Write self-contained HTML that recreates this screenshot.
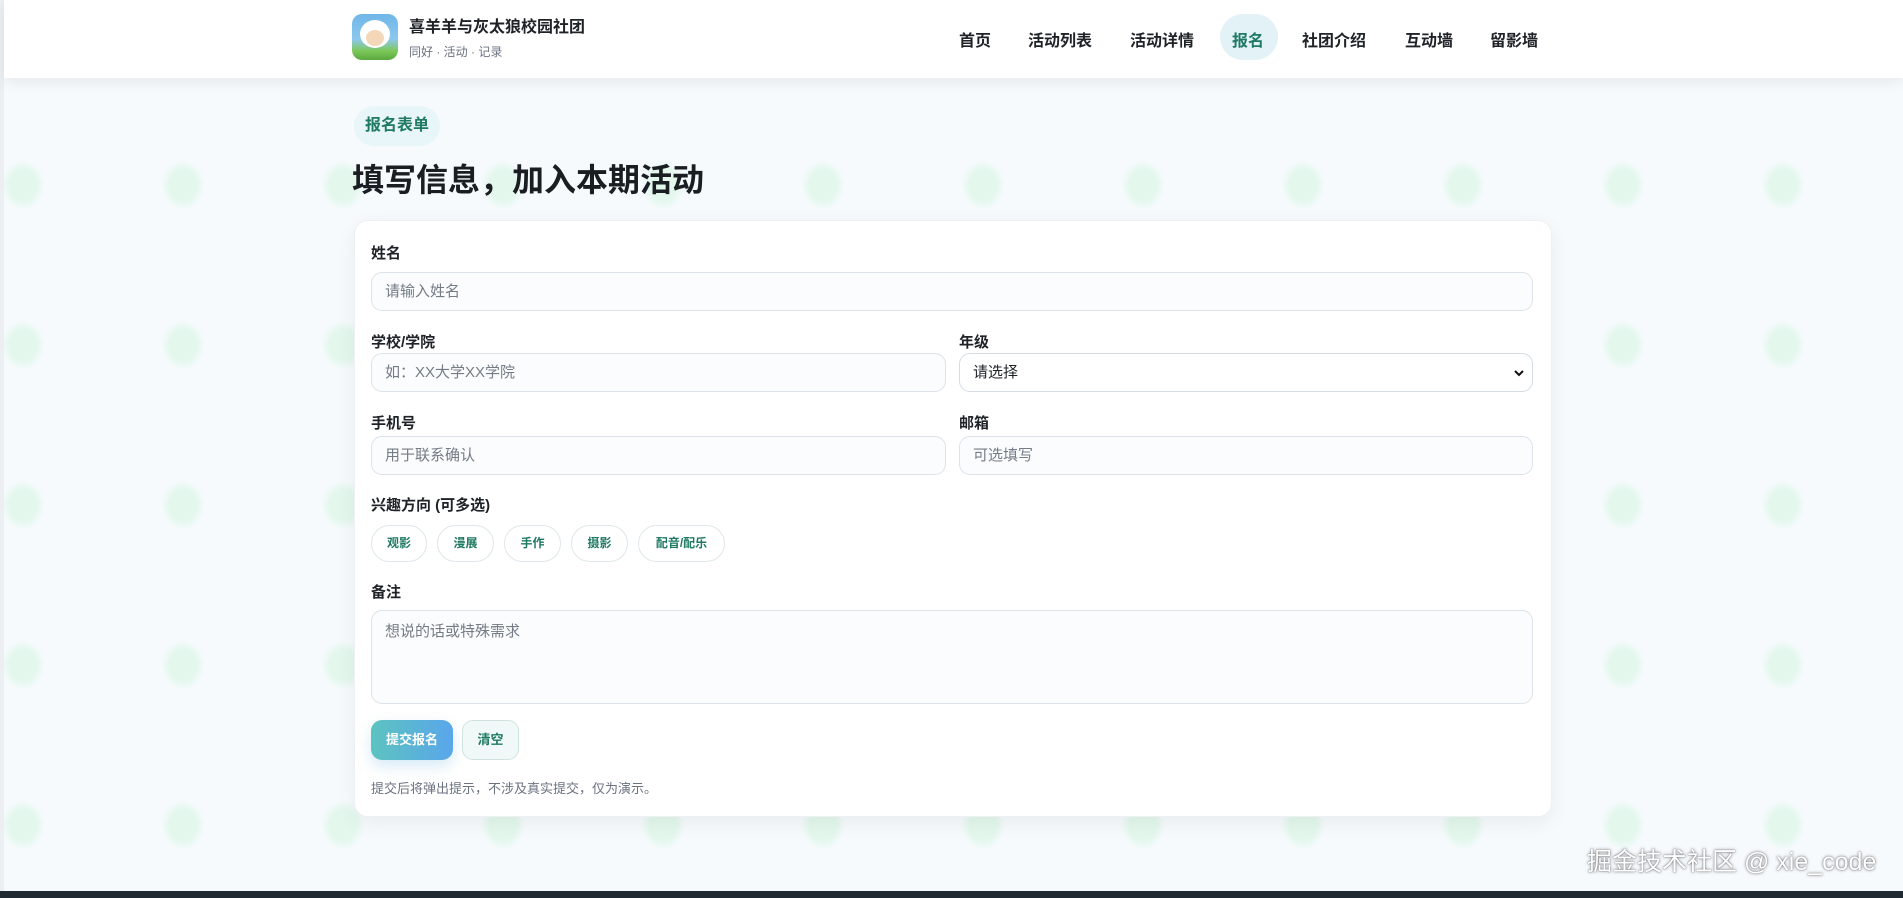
<!DOCTYPE html>
<html><head><meta charset="utf-8"><style>
*{box-sizing:border-box;margin:0;padding:0}
html,body{width:1903px;height:898px;overflow:hidden}
body{font-family:"Liberation Sans","Noto Sans CJK SC",sans-serif;background-color:#f6fafd;
background-image:radial-gradient(ellipse 22px 25px at 23px 25px,#e3f7ec 60%,rgba(227,247,236,0) 100%);
background-size:160px 160px;background-position:0 160px;position:relative;color:#1f2328}
.left{position:absolute;left:0;top:0;width:4px;height:898px;background:#eceff2}
header{position:absolute;left:4px;top:0;width:1899px;height:78px;background:#fff;box-shadow:0 4px 14px rgba(0,0,0,.07)}
.logo{position:absolute;left:352px;top:14px;width:46px;height:46px;border-radius:10px;background:linear-gradient(#6fb6e8 0,#8cc7ee 55%,#7cc85a 80%,#5aa83e 100%);overflow:hidden}
.logo::before{content:"";position:absolute;left:8px;top:6px;width:30px;height:28px;border-radius:50%;background:#fff}
.logo::after{content:"";position:absolute;left:14px;top:16px;width:18px;height:16px;border-radius:50%;background:#f4d6b8}
.t1{position:absolute;left:409px;top:13px;font-size:16px;font-weight:bold;color:#1f2328}
.t2{position:absolute;left:409px;top:43px;font-size:12px;color:#6b7280}
nav a{position:absolute;top:27px;font-size:16px;font-weight:bold;color:#1f2328}
.act{position:absolute;left:1220px;top:14px;width:58px;height:46px;border-radius:23px;background:#e3f2f6}
.badge{position:absolute;left:354px;top:106px;width:86px;height:40px;border-radius:20px;background:#e8f5f9;color:#1f7a63;font-size:16px;font-weight:bold;text-align:center;line-height:40px}
h1{position:absolute;left:352px;top:155px;font-size:32px;font-weight:bold;color:#1a1d21}
.card{position:absolute;left:354px;top:220px;width:1198px;height:597px;background:#fff;border-radius:14px;box-shadow:0 6px 20px rgba(0,0,0,.06);border:1px solid #eef1f4}
.lb{position:absolute;font-size:15px;font-weight:bold;color:#1f2328}
.in{position:absolute;height:39px;border:1px solid #dde3ea;border-radius:11px;background:#fafcfe;font-size:15px;color:#757c85;padding-left:13px;line-height:37px}
.chip{position:absolute;top:525px;height:37px;border:1px solid #dfe7ea;border-radius:19px;background:#fff;font-size:12px;font-weight:bold;color:#1f7a63;text-align:center;line-height:35px}
.btn{position:absolute;top:720px;height:40px;border-radius:11px;font-size:13px;font-weight:bold;text-align:center;line-height:40px}
.wm{position:absolute;left:1587px;top:842px;font-size:25px;color:#fff;text-shadow:0 0 3px rgba(0,0,0,.5),0 0 1px rgba(0,0,0,.6)}
.foot{position:absolute;left:0;top:891px;width:1903px;height:7px;background:#1f2a33}
</style></head><body>
<div class="left"></div>
<header></header>
<div class="logo"></div>
<div class="t1">喜羊羊与灰太狼校园社团</div>
<div class="t2">同好 · 活动 · 记录</div>
<div class="act"></div>
<nav>
<a style="left:959px">首页</a>
<a style="left:1028px">活动列表</a>
<a style="left:1130px">活动详情</a>
<a style="left:1232px;color:#1f7a63">报名</a>
<a style="left:1302px">社团介绍</a>
<a style="left:1405px">互动墙</a>
<a style="left:1490px">留影墙</a>
</nav>
<div class="badge">报名表单</div>
<h1>填写信息，加入本期活动</h1>
<div class="card"></div>
<div class="lb" style="left:371px;top:242px">姓名</div>
<div class="in" style="left:371px;top:272px;width:1162px">请输入姓名</div>
<div class="lb" style="left:371px;top:331px">学校/学院</div>
<div class="lb" style="left:959px;top:331px">年级</div>
<div class="in" style="left:371px;top:353px;width:575px">如：XX大学XX学院</div>
<div class="in" style="left:959px;top:353px;width:574px;background:#fff;color:#1f2328;border-color:#d5dce3">请选择<svg style="position:absolute;right:8px;top:15px" width="10" height="8" viewBox="0 0 10 8"><path d="M1 2l4 4 4-4" stroke="#111" stroke-width="2" fill="none"/></svg></div>
<div class="lb" style="left:371px;top:412px">手机号</div>
<div class="lb" style="left:959px;top:412px">邮箱</div>
<div class="in" style="left:371px;top:436px;width:575px">用于联系确认</div>
<div class="in" style="left:959px;top:436px;width:574px">可选填写</div>
<div class="lb" style="left:371px;top:494px">兴趣方向 (可多选)</div>
<div class="chip" style="left:371px;width:56px">观影</div>
<div class="chip" style="left:437px;width:57px">漫展</div>
<div class="chip" style="left:504px;width:57px">手作</div>
<div class="chip" style="left:571px;width:57px">摄影</div>
<div class="chip" style="left:638px;width:87px">配音/配乐</div>
<div class="lb" style="left:371px;top:581px">备注</div>
<div class="in" style="left:371px;top:610px;width:1162px;height:94px;line-height:1;padding-top:13px">想说的话或特殊需求</div>
<div class="btn" style="left:371px;width:82px;background:linear-gradient(90deg,#5cc3c0,#5aa6ea);color:#fff;box-shadow:0 6px 14px rgba(90,170,220,.25)">提交报名</div>
<div class="btn" style="left:462px;width:57px;background:#f1f9f8;border:1px solid #cfe3e0;color:#1f7a63;line-height:38px">清空</div>
<div style="position:absolute;left:371px;top:778px;font-size:13px;color:#6b7280">提交后将弹出提示，不涉及真实提交，仅为演示。</div>
<div class="wm">掘金技术社区 @ xie_code</div>
<div class="foot"></div>
</body></html>
